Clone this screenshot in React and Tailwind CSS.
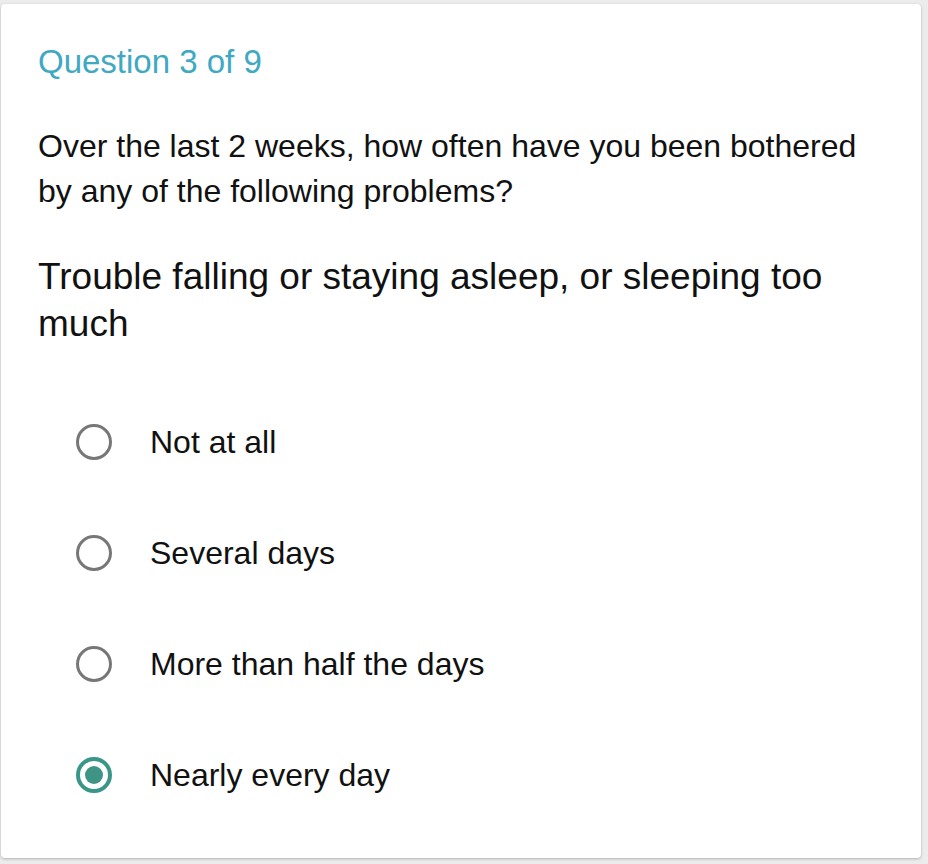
export default function App() {
  const options = ["Not at all", "Several days", "More than half the days", "Nearly every day"];
  const selected = 3;
  return (
    <div className="w-[928px] h-[864px] bg-[#ececec] pt-[4px] pl-[1px] pr-[7px] pb-[6px]" style={{ fontFamily: '"Liberation Sans", Arial, sans-serif' }}>
      <div className="h-full bg-white rounded-[4px] shadow-[0_1px_3px_rgba(0,0,0,0.25)] pl-[37px] pr-[20px] pt-[38px]">
        <div className="text-[33px] leading-[40px] text-[#40a9c2]">Question 3 of 9</div>
        <div className="mt-[42px] max-w-[840px] text-[32px] leading-[45px] text-[#111]">
          Over the last 2 weeks, how often have you been bothered by any of the following problems?
        </div>
        <div className="mt-[39px] text-[37px] leading-[47px] text-[#111]">
          Trouble falling or staying asleep, or sleeping too much
        </div>
        <div className="mt-[77px] pl-[38px] flex flex-col gap-[75px]">
          {options.map((o, i) => (
            <div key={o} className="flex items-center h-[36px]">
              {i === selected ? (
                <div className="w-[36px] h-[36px] rounded-full border-[4px] border-[#3a9688] flex items-center justify-center">
                  <div className="w-[18px] h-[18px] rounded-full bg-[#3f9585]" />
                </div>
              ) : (
                <div className="w-[36px] h-[36px] rounded-full border-[3px] border-[#777]" />
              )}
              <div className="ml-[38px] text-[32px] leading-[36px] text-[#111]">{o}</div>
            </div>
          ))}
        </div>
      </div>
    </div>
  );
}
